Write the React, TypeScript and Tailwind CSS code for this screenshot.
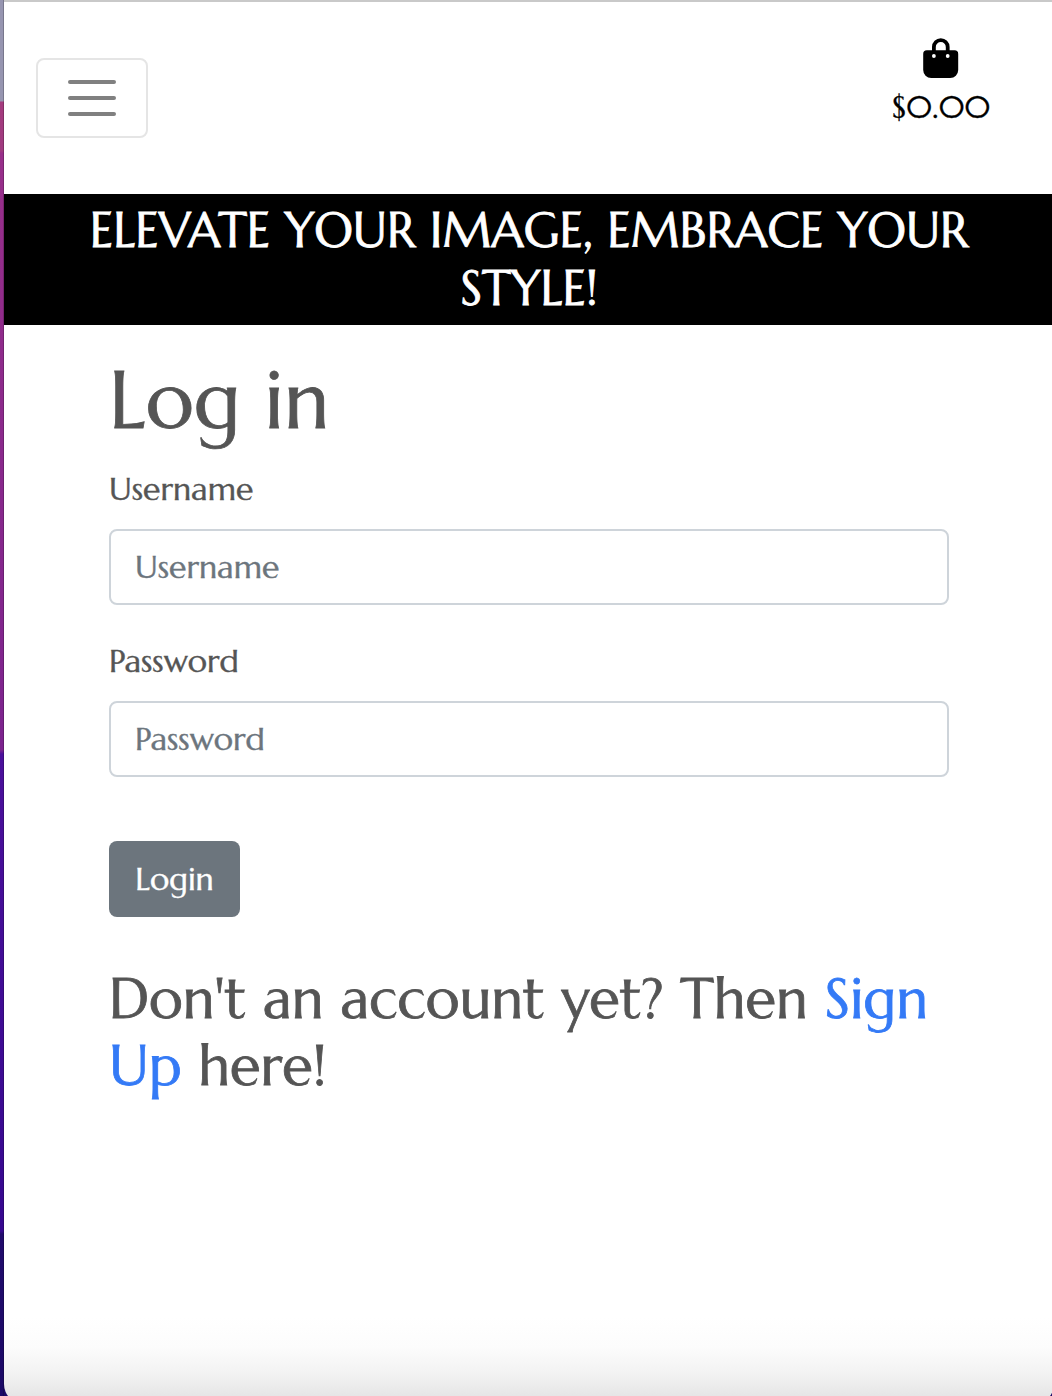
import React from "react";

function BagIcon() {
  return (
    <svg width="36" height="40" viewBox="0 0 36 40" aria-hidden="true">
      <path
        fill="#000"
        fillRule="evenodd"
        d="M9 12.3V9a8.8 8.8 0 0 1 17.6 0v3.3h5a3.600 3.600 0 0 1 3.600 3.600V32a8 8 0 0 1-8 8H8.2a8 8 0 0 1-8-8V15.900a3.600 3.600 0 0 1 3.600-3.600zM12.800 12.300h10V9a5 5 0 0 0-10 0zM10.900 16.100a1.900 1.900 0 1 0 0 3.800 1.900 1.900 0 0 0 0-3.800zM24.700 16.100a1.900 1.900 0 1 0 0 3.800 1.900 1.900 0 0 0 0-3.800z"
      />
    </svg>
  );
}

function Field({ label, type }: { label: string; type: string }) {
  return (
    <label className="block">
      <span className="block h-12 leading-12">{label}</span>
      <input
        type={type}
        placeholder={label}
        className="mt-4 block h-[76px] w-full rounded-lg border-2 border-[#ced4da] bg-white px-6 outline-none placeholder:text-[#6c757d] placeholder:opacity-100"
      />
    </label>
  );
}

export default function App() {
  return (
    <div className="flex h-[1396px] w-full overflow-hidden bg-[linear-gradient(to_bottom,#9695b0_0,#9695b0_101px,#a43b7e_102px,#a03a80_151px,#982f8a_153px,#7c238e_750px,#4b109b_754px,#36088f_1231px,#210b6c_1234px,#1b0966_1396px)] font-['Marcellus','Lato',sans-serif] text-[32px] text-[#555] [-webkit-text-stroke:0.4px]">
      <div className="w-1 shrink-0 border-r border-black/20" />
      <div className="-mr-0.5 h-[1404px] min-w-0 flex-1 rounded-b-[20px] border-t-2 border-[#c9c9c9] bg-[linear-gradient(to_bottom,#fff_0,#fff_1315px,#fcfcfc_1345px,#f2f2f2_1372px,#e6e6e6_1394px)]">
        <header className="flex h-48 items-start justify-between pl-8">
          <button aria-label="Menu" className="mt-14 flex h-20 w-28 flex-col items-center justify-center gap-3 rounded-lg border-2 border-[#e5e5e5]">
            <span className="h-1 w-12 rounded-full bg-[#808080]" />
            <span className="h-1 w-12 rounded-full bg-[#808080]" />
            <span className="h-1 w-12 rounded-full bg-[#808080]" />
          </button>
          <a className="mr-16 mt-9 flex w-[98px] flex-col items-center text-black">
            <BagIcon />
            <span className="mt-[5px] whitespace-nowrap leading-12 [-webkit-text-stroke:0.3px]">$0.00</span>
          </a>
        </header>
        <div className="h-[131px] bg-black pt-[7px] text-center text-[48px] leading-[58px] text-white [-webkit-text-stroke:0.8px]">
          <p>ELEVATE YOUR IMAGE, EMBRACE YOUR<br />STYLE!</p>
        </div>
        <main className="ml-[105px] w-[840px] pt-[27px]">
          <h1 className="h-24 whitespace-nowrap text-[80px] leading-24 [-webkit-text-stroke:0.8px]">Log in</h1>
          <form className="mt-[17px] flex flex-col" onSubmit={(e) => e.preventDefault()}>
            <Field label="Username" type="text" />
            <div className="mt-8">
              <Field label="Password" type="password" />
            </div>
            <button className="mt-16 h-[76px] w-[131px] rounded-lg bg-[#6c757d] text-white">Login</button>
          </form>
          <h2 className="mt-12 whitespace-nowrap text-[56px] leading-[67px] [-webkit-text-stroke:0.8px]">
            Don't an account yet? Then <a className="text-[#347af6]">Sign<br />Up</a> here!
          </h2>
        </main>
      </div>
    </div>
  );
}
